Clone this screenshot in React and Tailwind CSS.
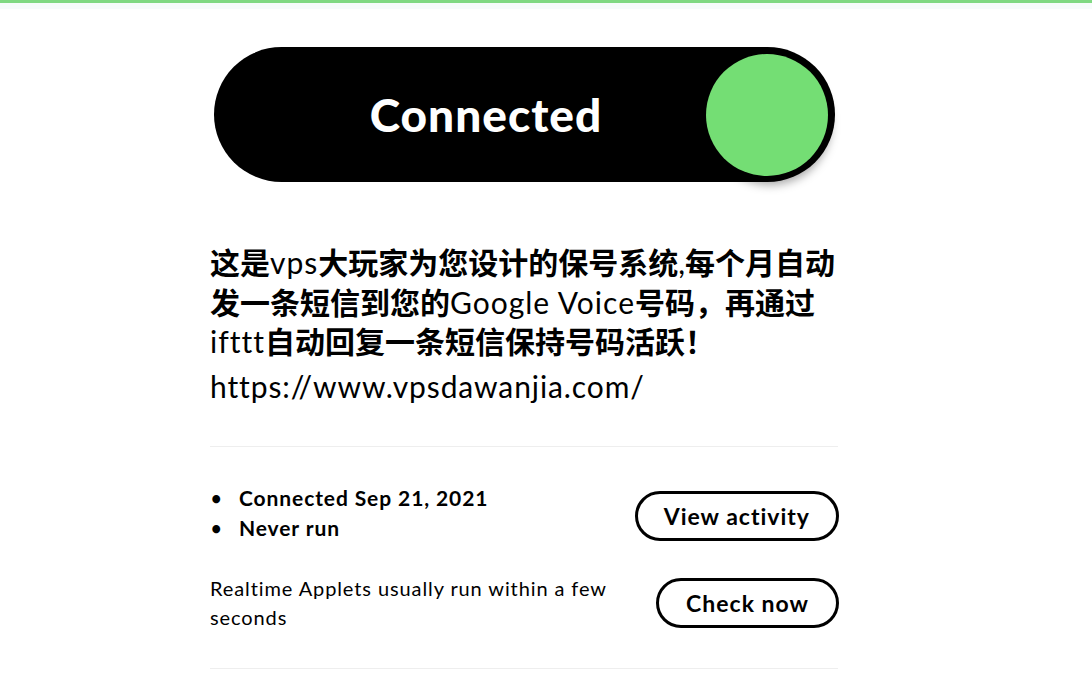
export default function App() {
  const latin = "font-normal tracking-[1px]";
  return (
    <div className="min-h-[680px] bg-white font-['Lato','Noto_Sans_CJK_SC',sans-serif] text-black">
      <div className="h-[3px] bg-[#80d982]" />
      <div className="h-[6px] bg-[#f7fcfb]" />
      <div className="ml-[210px] w-[628px] pt-[38px]">
        {/* toggle */}
        <div className="ml-[4px] flex h-[135px] w-[621px] items-center rounded-full bg-black pr-[7px]">
          <div className="flex flex-1 justify-center pl-[52px]">
            <span className="text-[46px] font-black leading-none tracking-[1px] text-white">
              Connected
            </span>
          </div>
          <div className="h-[122px] w-[122px] rounded-full bg-[#74de74] shadow-[3px_9px_10px_rgba(0,0,0,0.35)]" />
        </div>

        {/* description */}
        <div className="mt-[61px] text-[30px] font-bold leading-[39.5px]">
          <p className="whitespace-nowrap">
            这是<span className={latin}>vps</span>大玩家为您设计的保号系统<span className="font-normal">,</span>每个月自动
          </p>
          <p className="whitespace-nowrap">
            发一条短信到您的<span className={latin}>Google Voice</span>号码，再通过
          </p>
          <p className="whitespace-nowrap">
            <span className={latin}>ifttt</span>自动回复一条短信保持号码活跃！
          </p>
          <p className="mt-[5px] whitespace-nowrap font-normal tracking-[0.9px]">
            https://www.vpsdawanjia.com/
          </p>
        </div>

        <div className="mt-[40px] h-px bg-[#eeeeee]" />

        <div className="flex items-center justify-between pt-[36px]">
          <ul className="text-[21px] font-bold leading-[30px] tracking-[0.9px]">
            <li className="flex items-center">
              <span className="w-[29px] pl-[1px] text-[18px]">•</span>
              Connected Sep 21, 2021
            </li>
            <li className="flex items-center">
              <span className="w-[29px] pl-[1px] text-[18px]">•</span>
              Never run
            </li>
          </ul>
          <button className="mr-[-1px] mt-[6px] flex h-[50px] items-center rounded-full border-[3px] border-black px-[26px] text-[23px] font-bold tracking-[1px]">
            View activity
          </button>
        </div>

        <div className="mt-[31px] flex items-center justify-between">
          <p className="w-[420px] text-[20px] leading-[29px] tracking-[0.9px]">
            Realtime Applets usually run within a few seconds
          </p>
          <button className="mr-[-1px] flex h-[50px] items-center rounded-full border-[3px] border-black px-[27px] text-[23px] font-bold tracking-[1px]">
            Check now
          </button>
        </div>

        <div className="mt-[36px] h-px bg-[#eeeeee]" />
      </div>
    </div>
  );
}
